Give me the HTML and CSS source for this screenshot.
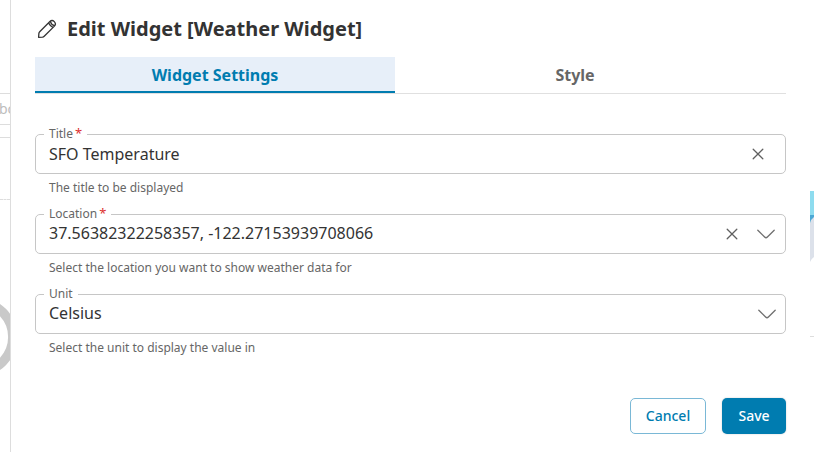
FILE: index.html
```html
<!DOCTYPE html>
<html lang="en">
<head>
<meta charset="utf-8">
<title>Edit Widget</title>
<link rel="stylesheet" href="styles.css">
</head>
<body>
<div class="page">
  <aside class="behind-left">
    <div class="crumb">bc</div>
    <div class="bar"></div>
    <div class="card"></div>
    <svg class="gauge" width="10" height="80" viewBox="0 0 10 80"><circle cx="-22.3" cy="40" r="35.1" fill="none" stroke="#c9c9c9" stroke-width="9.4"/></svg>
  </aside>
  <main class="dialog">
    <header class="heading">
      <svg class="pencil" width="20" height="20" viewBox="0 0 20 20" fill="none" stroke="#333" stroke-width="1.3" stroke-linejoin="round" stroke-linecap="round"><path d="M1.6 18.3 1.9 14.4Q2 13.4 2.7 12.7L12.9 2.5Q15.1 .4 17.3 2.6 19.5 4.9 17.4 7.1L7.2 17.3Q6.5 18 5.5 18.1ZM11.5 3.9C12.5 5.8 14.2 7.5 16 8.5M13.3 2.3C13.8 4.1 15.8 6.2 17.6 6.7"/></svg>
      <h1>Edit Widget [Weather Widget]</h1>
    </header>
    <nav class="tabs">
      <div class="tab active">Widget Settings</div>
      <div class="tab">Style</div>
    </nav>
    <form class="fields">
      <div class="field">
        <fieldset class="box"><legend>Title<b>*</b></legend></fieldset>
        <div class="control title-control">
          <span class="value">SFO Temperature</span>
          <svg class="clear" width="12" height="12" viewBox="0 0 12 12"><path d="M1.2 1.2 10.8 10.8M10.8 1.2 1.2 10.8"/></svg>
        </div>
        <p>The title to be displayed</p>
      </div>
      <div class="field">
        <fieldset class="box"><legend>Location<b>*</b></legend></fieldset>
        <div class="control location-control">
          <span class="value">37.56382322258357, -122.27153939708066</span>
          <svg class="clear" width="12" height="12" viewBox="0 0 12 12"><path d="M1.2 1.2 10.8 10.8M10.8 1.2 1.2 10.8"/></svg>
          <svg class="chevron" width="20" height="12" viewBox="0 0 20 12"><path d="M1.8 2.2 8.6 9Q10 10.4 11.4 9L18.2 2.2"/></svg>
        </div>
        <p>Select the location you want to show weather data for</p>
      </div>
      <div class="field">
        <fieldset class="box"><legend>Unit</legend></fieldset>
        <div class="control unit-control">
          <span class="value">Celsius</span>
          <svg class="chevron" width="20" height="12" viewBox="0 0 20 12"><path d="M1.8 2.2 8.6 9Q10 10.4 11.4 9L18.2 2.2"/></svg>
        </div>
        <p>Select the unit to display the value in</p>
      </div>
    </form>
    <footer class="actions">
      <button class="cancel">Cancel</button>
      <button class="save">Save</button>
    </footer>
  </main>
  <aside class="behind-right">
    <svg width="4" height="452" viewBox="0 0 4 452"><path fill="#8edcef" d="M0 191h4v24H0z"/><path fill="#4ca8d5" d="M0 215h4v8H0z"/><path fill="#dce1ea" d="M4 217Q1 219 0 223V262Q1 259 4 257Z"/><path fill="#ddd" d="M0 336h4v1H0z"/></svg>
  </aside>
</div>
</body>
</html>
```
FILE: styles.css
```css
* { box-sizing: border-box; }
body { margin: 0; background: #fff; color: #333; font-family: "Noto Sans", sans-serif; overflow: hidden; }
.page { display: grid; grid-template-columns: 10px 800px 4px; height: 452px; }
.behind-left { overflow: hidden; padding-top: 93px; }
.crumb { height: 32px; border: solid #ddd; border-width: 1px 0; color: #bdbdbd; font-size: 14px; line-height: 29px; margin-left: -1px; }
.bar { height: 13px; border-bottom: 1px solid #ddd; }
.card { height: 62px; border-bottom: 1px dashed #ddd; }
.gauge { display: block; margin-top: 97px; }
.behind-right svg { display: block; }
.dialog { border-left: 1px solid #ddd; padding: 0 24px; background: #fff; }
.heading { display: flex; height: 57px; padding: 19px 0 0 2px; }
.pencil { flex: none; }
h1 { margin: -4px 0 0 10px; font-size: 20px; line-height: 28px; font-weight: 700; white-space: nowrap; }
.tabs { display: flex; height: 37px; border-bottom: 1px solid #e0e0e0; }
.tab { width: 360px; height: 36px; text-align: center; font-size: 16px; line-height: 36px; font-weight: 700; color: #666; }
.tab.active { background: #e7eff9; color: #007cb0; border-bottom: 2px solid #007cb0; }
.fields { padding-top: 40px; }
.field { position: relative; height: 80px; }
.box { position: absolute; top: -8px; left: 0; width: 751px; height: 48px; margin: 0; padding: 0 8px; border: 1px solid #c6c6c6; border-radius: 5px; }
legend { padding: 0 5px; height: 16px; font-size: 12px; line-height: 15px; color: #666; }
legend b { margin-left: 2px; color: #dc3030; font-size: 13px; font-weight: 400; line-height: 12px; }
.control { position: relative; display: flex; align-items: center; height: 40px; padding-left: 14px; }
.value { flex: 1; font-size: 16px; line-height: 24px; }
.title-control { padding-right: 22px; }
.location-control { padding-right: 10px; }
.location-control .value, .unit-control .value { margin-top: -2px; }
.location-control .chevron { margin-left: 18px; }
.unit-control { padding-right: 9px; }
.clear, .chevron { flex: none; fill: none; stroke: #606060; stroke-width: 1.3; stroke-linecap: round; stroke-linejoin: round; }
.chevron { stroke: #707070; }
.field p { margin: 5px 0 0 14px; font-size: 12px; line-height: 18px; color: #666; }
.actions { display: flex; justify-content: flex-end; gap: 16px; padding-top: 24px; }
button { height: 36px; border-radius: 5px; font: 500 14px "Noto Sans", sans-serif; padding: 0 0 2px; }
.cancel { width: 76px; color: #007cb0; background: #fff; border: 1px solid #7ab8d6; }
.save { width: 64px; color: #fff; background: #007cb0; border: 0; box-shadow: 0 0 2px #0003; }
```
